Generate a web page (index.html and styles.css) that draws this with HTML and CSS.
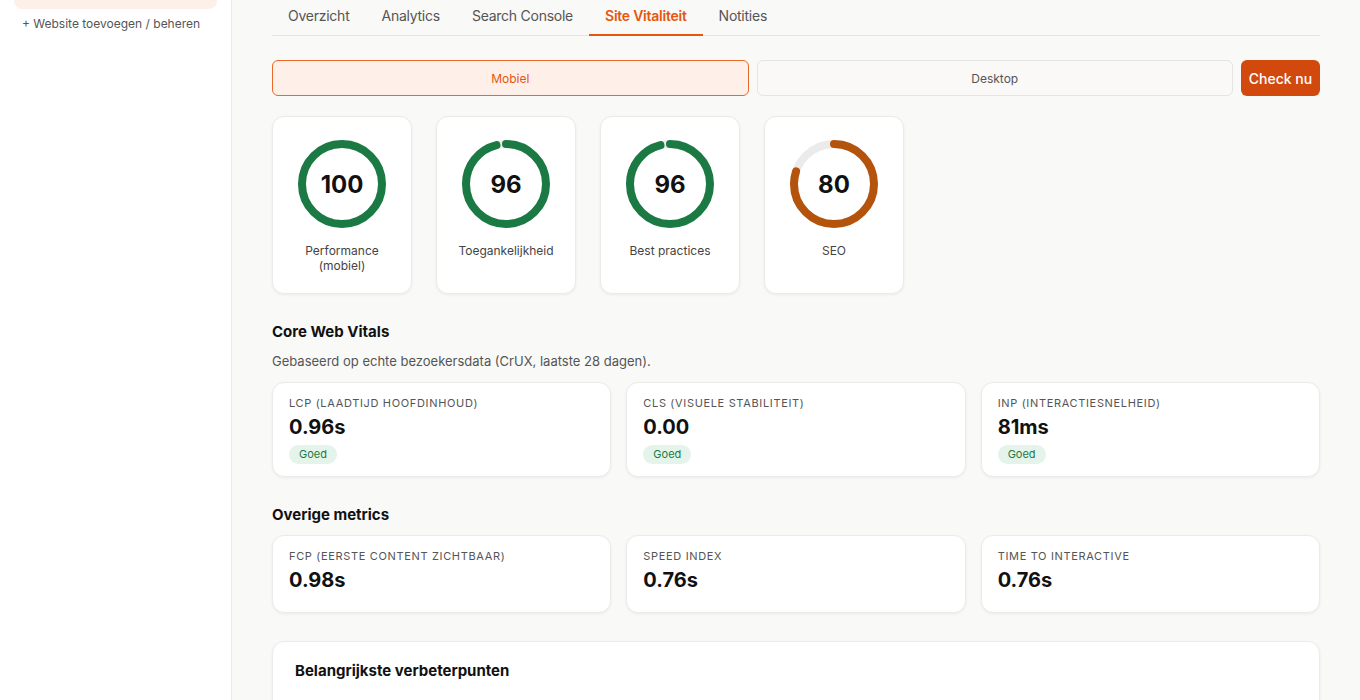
FILE: index.html
```html
<!DOCTYPE html>
<html lang="nl">
<head>
  <meta charset="UTF-8">
  <meta name="viewport" content="width=device-width, initial-scale=1.0">
  <title>Site Vitaliteit</title>
  <link rel="stylesheet" href="styles.css">
</head>
<body>
  <div class="app">
    <aside class="sidebar">
      <div class="site-item active">bakkerij-vandenberg.nl</div>
      <a class="site-add" href="#">+ Website toevoegen / beheren</a>
    </aside>

    <main class="main">
      <nav class="tabs">
        <a class="tab" href="#">Overzicht</a>
        <a class="tab" href="#">Analytics</a>
        <a class="tab" href="#">Search Console</a>
        <a class="tab active" href="#">Site Vitaliteit</a>
        <a class="tab" href="#">Notities</a>
      </nav>

      <div class="device-row">
        <button class="device active">Mobiel</button>
        <button class="device">Desktop</button>
        <button class="check-btn">Check nu</button>
      </div>

      <div class="scores">
        <div class="score-card">
          <div class="ring">
            <svg width="92" height="92" viewBox="0 0 92 92">
              <circle class="ring-track" cx="46" cy="46" r="40"></circle>
              <circle class="ring-bar good" cx="46" cy="46" r="40" stroke-dasharray="251.33 251.33"></circle>
            </svg>
            <span class="ring-value">100</span>
          </div>
          <div class="score-label">Performance<br>(mobiel)</div>
        </div>
        <div class="score-card">
          <div class="ring">
            <svg width="92" height="92" viewBox="0 0 92 92">
              <circle class="ring-track" cx="46" cy="46" r="40"></circle>
              <circle class="ring-bar good" cx="46" cy="46" r="40" stroke-dasharray="241.27 251.33"></circle>
            </svg>
            <span class="ring-value">96</span>
          </div>
          <div class="score-label">Toegankelijkheid</div>
        </div>
        <div class="score-card">
          <div class="ring">
            <svg width="92" height="92" viewBox="0 0 92 92">
              <circle class="ring-track" cx="46" cy="46" r="40"></circle>
              <circle class="ring-bar good" cx="46" cy="46" r="40" stroke-dasharray="241.27 251.33"></circle>
            </svg>
            <span class="ring-value">96</span>
          </div>
          <div class="score-label">Best practices</div>
        </div>
        <div class="score-card">
          <div class="ring">
            <svg width="92" height="92" viewBox="0 0 92 92">
              <circle class="ring-track" cx="46" cy="46" r="40"></circle>
              <circle class="ring-bar average" cx="46" cy="46" r="40" stroke-dasharray="201.06 251.33"></circle>
            </svg>
            <span class="ring-value">80</span>
          </div>
          <div class="score-label">SEO</div>
        </div>
      </div>

      <h3 class="section-title">Core Web Vitals</h3>
      <p class="section-sub">Gebaseerd op echte bezoekersdata (CrUX, laatste 28 dagen).</p>
      <div class="metric-grid">
        <div class="metric-card vital">
          <div class="metric-label">LCP (laadtijd hoofdinhoud)</div>
          <div class="metric-value">0.96s</div>
          <span class="badge">Goed</span>
        </div>
        <div class="metric-card vital">
          <div class="metric-label">CLS (visuele stabiliteit)</div>
          <div class="metric-value">0.00</div>
          <span class="badge">Goed</span>
        </div>
        <div class="metric-card vital">
          <div class="metric-label">INP (interactiesnelheid)</div>
          <div class="metric-value">81ms</div>
          <span class="badge">Goed</span>
        </div>
      </div>

      <h3 class="section-title">Overige metrics</h3>
      <div class="metric-grid">
        <div class="metric-card">
          <div class="metric-label">FCP (eerste content zichtbaar)</div>
          <div class="metric-value">0.98s</div>
        </div>
        <div class="metric-card">
          <div class="metric-label">Speed Index</div>
          <div class="metric-value">0.76s</div>
        </div>
        <div class="metric-card">
          <div class="metric-label">Time to Interactive</div>
          <div class="metric-value">0.76s</div>
        </div>
      </div>

      <div class="panel">
        <h3 class="panel-title">Belangrijkste verbeterpunten</h3>
      </div>
    </main>
  </div>
</body>
</html>
```

FILE: styles.css
```css
html, body {
  overflow: hidden;
}
body {
  font-family: Inter, "Noto Sans", sans-serif;
  margin: 0;
  background-color: #f9f9f7;
  color: #111;
}
.app {
  display: flex;
  min-height: 800px;
  margin-top: -41px;
}

/* sidebar */
.sidebar {
  width: 232px;
  flex-shrink: 0;
  background-color: #ffffff;
  border-right: 1px solid #ebebea;
  padding: 13px 14px;
  box-sizing: border-box;
}
.site-item {
  height: 37px;
  box-sizing: border-box;
  padding: 8px 14px;
  border-radius: 8px;
  font-size: 13px;
  line-height: 20px;
  color: #e5560e;
  font-weight: 500;
}
.site-item.active {
  background-color: #fdf0e9;
}
.site-add {
  display: block;
  margin-top: 7px;
  padding: 0 8px;
  font-size: 12px;
  line-height: 16px;
  color: #555;
  text-decoration: none;
}

/* main */
.main {
  flex: 1;
  padding: 36px 40px 40px;
  min-width: 0;
}
.tabs {
  display: flex;
  border-bottom: 1px solid #e4e4e2;
}
.tab {
  padding: 11px 16px 8px;
  font-size: 14px;
  line-height: 20px;
  letter-spacing: -0.25px;
  color: #555;
  text-decoration: none;
  border-bottom: 2px solid transparent;
  margin-bottom: -1px;
}
.tab.active {
  color: #e5560e;
  font-weight: 600;
  border-bottom-color: #e5560e;
}

.device-row {
  display: flex;
  gap: 8px;
  margin-top: 24px;
}
.device {
  flex: 1;
  height: 36px;
  font-family: inherit;
  font-size: 12px;
  color: #555;
  background-color: #faf9f8;
  border: 1px solid #e4e4e2;
  border-radius: 6px;
  cursor: pointer;
}
.device.active {
  color: #e5560e;
  background-color: #fef0e9;
  border-color: #e8692a;
}
.check-btn {
  width: 79px;
  height: 36px;
  font-family: inherit;
  font-size: 14px;
  font-weight: 500;
  color: #fff;
  background-color: #d2490d;
  border: none;
  border-radius: 6px;
  cursor: pointer;
}

/* score rings */
.scores {
  display: flex;
  gap: 24px;
  margin-top: 20px;
}
.score-card {
  width: 140px;
  box-sizing: border-box;
  padding: 21px 10px 20px;
  background-color: #fff;
  border: 1px solid #ebebea;
  border-radius: 12px;
  box-shadow: 0 1px 3px rgba(0,0,0,0.06);
  display: flex;
  flex-direction: column;
  align-items: center;
}
.ring {
  position: relative;
  width: 92px;
  height: 92px;
}
.ring svg {
  display: block;
  transform: rotate(-90deg);
}
.ring circle {
  fill: none;
  stroke-width: 8;
}
.ring-track {
  stroke: #ebebeb;
}
.ring-bar {
  stroke-linecap: round;
}
.ring-bar.good {
  stroke: #1b7a43;
}
.ring-bar.average {
  stroke: #b4530c;
}
.ring-value {
  position: absolute;
  inset: 0;
  display: flex;
  align-items: center;
  justify-content: center;
  font-size: 24px;
  font-weight: 700;
  color: #111;
}
.score-label {
  margin-top: 13px;
  font-size: 12px;
  line-height: 15px;
  color: #444;
  text-align: center;
}

/* metrics */
.section-title {
  margin: 28px 0 0;
  font-size: 15px;
  line-height: 20px;
  font-weight: 700;
}
.section-sub {
  margin: 10px 0 0;
  font-size: 13px;
  line-height: 18px;
  color: #555;
}
.metric-grid {
  display: grid;
  grid-template-columns: repeat(3, 1fr);
  gap: 15px;
  margin-top: 10px;
}
.section-sub + .metric-grid {
  margin-top: 12px;
}
.metric-card {
  background-color: #fff;
  border: 1px solid #ebebea;
  border-radius: 12px;
  box-shadow: 0 1px 3px rgba(0,0,0,0.06);
  padding: 13px 16px 19px;
}
.metric-card.vital {
  padding-bottom: 12px;
}
.metric-label {
  font-size: 11px;
  line-height: 14px;
  letter-spacing: 0.06em;
  text-transform: uppercase;
  color: #555;
}
.metric-value {
  margin-top: 4px;
  font-size: 20px;
  line-height: 26px;
  font-weight: 700;
  color: #111;
}
.badge {
  display: inline-block;
  margin-top: 5px;
  padding: 2px 10px;
  font-size: 11px;
  line-height: 15px;
  color: #1b7a43;
  background-color: #e5f4ea;
  border-radius: 10px;
}

.panel {
  margin-top: 28px;
  background-color: #fff;
  border: 1px solid #ebebea;
  border-radius: 12px;
  box-shadow: 0 1px 3px rgba(0,0,0,0.06);
  padding: 19px 22px;
  min-height: 120px;
}
.panel-title {
  margin: 0;
  font-size: 15px;
  line-height: 20px;
  font-weight: 700;
}
```
